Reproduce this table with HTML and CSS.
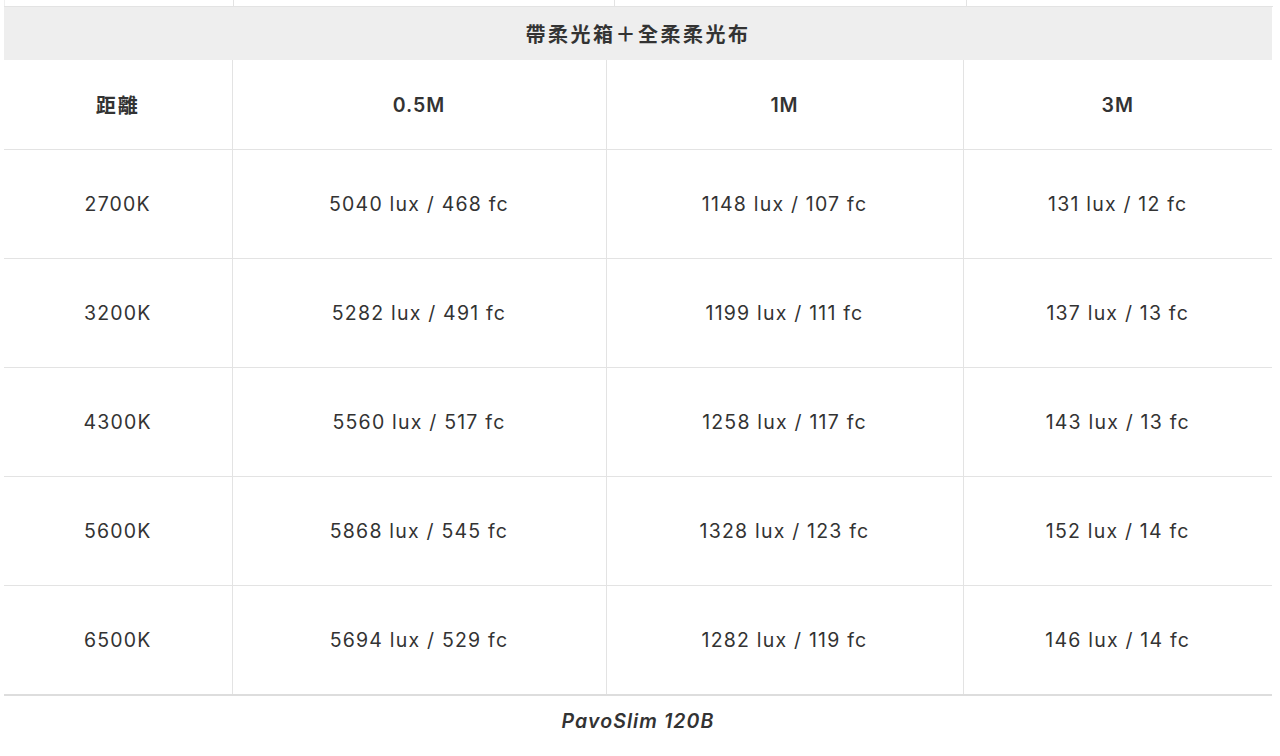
FILE: index.html
```html
<!DOCTYPE html>
<html lang="zh-Hant">
<head>
<meta charset="utf-8">
<link rel="stylesheet" href="styles.css">
</head>
<body>
<div class="page">
  <table class="prev">
    <colgroup><col class="p1"><col class="p2"><col class="p3"><col class="p4"></colgroup>
    <tr><td></td><td></td><td></td><td></td></tr>
  </table>
  <table class="lux">
    <colgroup><col class="c1"><col class="c2"><col class="c3"><col class="c4"></colgroup>
    <thead>
      <tr class="band"><th colspan="4">帶柔光箱＋全柔柔光布</th></tr>
      <tr class="head"><th>距離</th><th>0.5M</th><th>1M</th><th>3M</th></tr>
    </thead>
    <tbody>
      <tr><td>2700K</td><td>5040 lux / 468 fc</td><td>1148 lux / 107 fc</td><td>131 lux / 12 fc</td></tr>
      <tr><td>3200K</td><td>5282 lux / 491 fc</td><td>1199 lux / 111 fc</td><td>137 lux / 13 fc</td></tr>
      <tr><td>4300K</td><td>5560 lux / 517 fc</td><td>1258 lux / 117 fc</td><td>143 lux / 13 fc</td></tr>
      <tr><td>5600K</td><td>5868 lux / 545 fc</td><td>1328 lux / 123 fc</td><td>152 lux / 14 fc</td></tr>
      <tr class="last"><td>6500K</td><td>5694 lux / 529 fc</td><td>1282 lux / 119 fc</td><td>146 lux / 14 fc</td></tr>
    </tbody>
  </table>
  <p class="caption">PavoSlim 120B</p>
</div>
</body>
</html>
```

FILE: styles.css
```css
html, body {
  margin: 0;
  padding: 0;
  background: #ffffff;
}
body {
  font-family: Inter, "Noto Sans CJK TC", sans-serif;
  color: #333333;
}
.page {
  width: 1268px;
  margin-left: 4px;
}
table {
  border-collapse: collapse;
  table-layout: fixed;
  width: 1268px;
}
.prev td {
  height: 6px;
  padding: 0;
  border-left: 1px solid #e3e3e3;
  border-bottom: 1px solid #e3e3e3;
}
.prev td:first-child { border-left: 1px solid #f0f0f0; }
.p1 { width: 229px; }
.p2 { width: 381px; }
.p3 { width: 352px; }
.p4 { width: 306px; }
.c1 { width: 228px; }
.c2 { width: 374px; }
.c3 { width: 357px; }
.c4 { width: 309px; }
.lux th, .lux td {
  padding: 0;
  text-align: center;
  vertical-align: middle;
  font-size: 19.5px;
  letter-spacing: 1.2px;
  border-bottom: 1px solid #e3e3e3;
}
.lux th + th, .lux td + td {
  border-left: 1px solid #e3e3e3;
}
.band th {
  background: #eeeeee;
  height: 53px;
  font-weight: 700;
  font-size: 20px;
  letter-spacing: 2.5px;
  border-bottom: none;
}
.head th {
  height: 89px;
  font-weight: 600;
  letter-spacing: 1px;
}
.head th:first-child {
  font-size: 20px;
  font-weight: 700;
  letter-spacing: 2px;
}
.lux td {
  height: 108px;
  font-weight: 400;
}
.lux .last td {
  border-bottom: 2px solid #dddddd;
}
.caption {
  margin: 13px 0 0;
  text-align: center;
  font-size: 19.5px;
  font-style: italic;
  font-weight: 600;
  letter-spacing: 1.1px;
  line-height: 24px;
}
```
